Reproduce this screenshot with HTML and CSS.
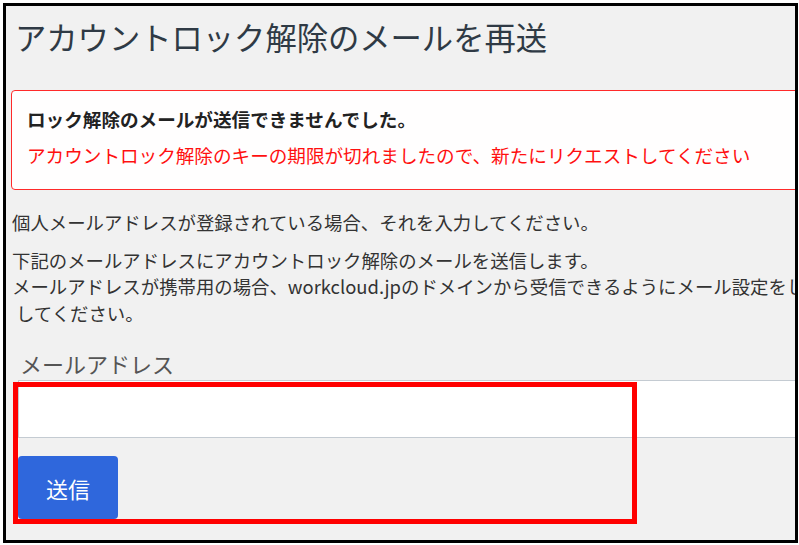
FILE: index.html
```html
<!DOCTYPE html>
<html lang="ja">
<head>
<meta charset="utf-8">
<title>アカウントロック解除のメールを再送</title>
<link rel="stylesheet" href="styles.css">
</head>
<body>
<div class="frame">
  <h1 class="title">アカウントロック解除のメールを再送</h1>
  <div class="alert">
    <p class="alert-head">ロック解除のメールが送信できませんでした。</p>
    <p class="alert-msg">アカウントロック解除のキーの期限が切れましたので、新たにリクエストしてください</p>
  </div>
  <p class="note">個人メールアドレスが登録されている場合、それを入力してください。</p>
  <p class="note">下記のメールアドレスにアカウントロック解除のメールを送信します。<br>メールアドレスが携帯用の場合、workcloud.jpのドメインから受信できるようにメール設定をし<br><span class="indent">してください。</span></p>
  <label class="label" for="mail">メールアドレス</label>
  <div class="form">
    <input class="input" id="mail" type="text">
    <button class="btn" type="button">送信</button>
    <div class="highlight"></div>
  </div>
</div>
</body>
</html>
```

FILE: styles.css
```css
html, body {
  margin: 0;
  padding: 0;
  background: #ffffff;
}
body {
  font-family: "Noto Sans CJK JP", "Noto Sans", sans-serif;
}
.frame {
  margin: 3px 1px 2px 3px;
  height: 534px;
  border: 3px solid #000;
  background: #f1f1f1;
  overflow: hidden;
  position: relative;
}
.title {
  margin: 11px 0 33px 9px;
  font-size: 31.3px;
  line-height: 40px;
  font-weight: normal;
  color: #2f3a45;
  white-space: nowrap;
}
.alert {
  margin-left: 5px;
  width: 900px;
  border: 1px solid #ff2a2a;
  border-radius: 4px;
  background: #fffefe;
  padding: 15px 15px 0 15px;
  box-sizing: border-box;
  height: 100px;
}
.alert p {
  margin: 0;
  font-size: 18.6px;
  line-height: 26px;
  white-space: nowrap;
}
.alert-head {
  font-weight: bold;
  color: #222;
}
.alert .alert-msg {
  margin-top: 10px;
  color: #ff1010;
}
.note {
  margin: 19px 0 0 6px;
  font-size: 18.4px;
  line-height: 26.5px;
  color: #333;
  white-space: nowrap;
}
.note + .note {
  margin-top: 11px;
}
.indent {
  padding-left: 4px;
}
.label {
  display: block;
  margin: 22px 0 0 14px;
  font-size: 22px;
  line-height: 30px;
  color: #555;
}
.form {
  position: relative;
  margin: 2px 0 0 12px;
}
.input {
  display: block;
  width: 900px;
  height: 58px;
  box-sizing: border-box;
  margin: 0;
  border: 1px solid #c4cbd2;
  background: #fff;
  outline: none;
}
.btn {
  display: block;
  margin-top: 18px;
  width: 100px;
  height: 63px;
  border: none;
  border-radius: 4px;
  background: #2f67dc;
  color: #fff;
  font-family: "Noto Sans CJK JP", sans-serif;
  font-size: 22px;
  padding: 0;
}
.highlight {
  position: absolute;
  left: -5px;
  top: 2px;
  width: 624px;
  height: 142px;
  box-sizing: border-box;
  border: 5px solid #ff0000;
  pointer-events: none;
}
```
